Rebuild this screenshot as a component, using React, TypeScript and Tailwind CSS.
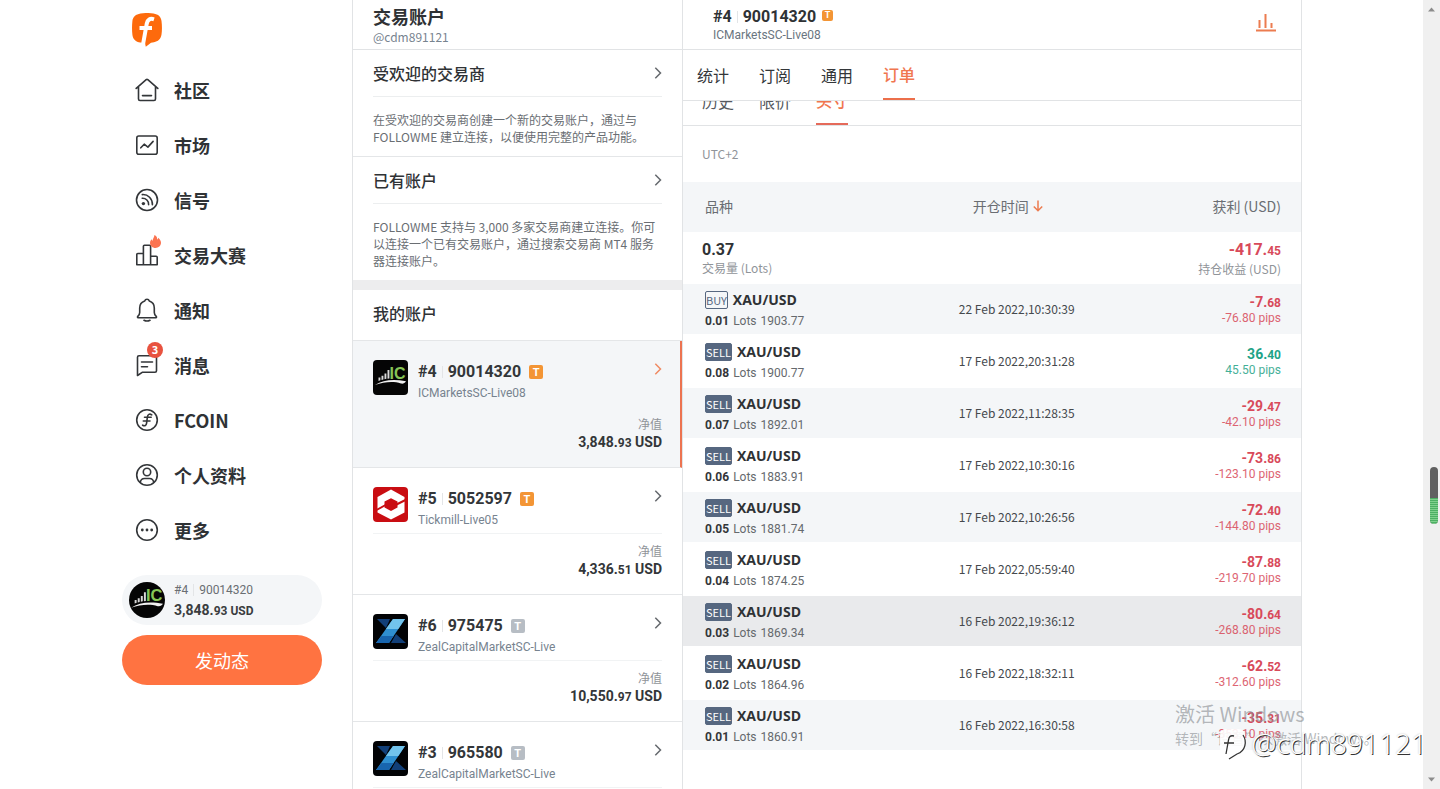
import type { ReactNode } from 'react';
import clsx from 'clsx';

type Broker = 'ic' | 'tickmill' | 'zeal';

interface Account {
  index: string;
  login: string;
  server: string;
  broker: Broker;
  tag: 'orange' | 'gray';
  equity?: [string, string];
  active?: boolean;
}

interface Order {
  side: 'BUY' | 'SELL';
  lots: string;
  price: string;
  time: string;
  profit: [string, string];
  pips: string;
  hovered?: boolean;
}

const accounts: Account[] = [
  { index: '#4', login: '90014320', server: 'ICMarketsSC-Live08', broker: 'ic', tag: 'orange', equity: ['3,848.', '93'], active: true },
  { index: '#5', login: '5052597', server: 'Tickmill-Live05', broker: 'tickmill', tag: 'orange', equity: ['4,336.', '51'] },
  { index: '#6', login: '975475', server: 'ZealCapitalMarketSC-Live', broker: 'zeal', tag: 'gray', equity: ['10,550.', '97'] },
  { index: '#3', login: '965580', server: 'ZealCapitalMarketSC-Live', broker: 'zeal', tag: 'gray' },
];

const orders: Order[] = [
  { side: 'BUY', lots: '0.01', price: '1903.77', time: '22 Feb 2022,10:30:39', profit: ['-7.', '68'], pips: '-76.80' },
  { side: 'SELL', lots: '0.08', price: '1900.77', time: '17 Feb 2022,20:31:28', profit: ['36.', '40'], pips: '45.50' },
  { side: 'SELL', lots: '0.07', price: '1892.01', time: '17 Feb 2022,11:28:35', profit: ['-29.', '47'], pips: '-42.10' },
  { side: 'SELL', lots: '0.06', price: '1883.91', time: '17 Feb 2022,10:30:16', profit: ['-73.', '86'], pips: '-123.10' },
  { side: 'SELL', lots: '0.05', price: '1881.74', time: '17 Feb 2022,10:26:56', profit: ['-72.', '40'], pips: '-144.80' },
  { side: 'SELL', lots: '0.04', price: '1874.25', time: '17 Feb 2022,05:59:40', profit: ['-87.', '88'], pips: '-219.70' },
  { side: 'SELL', lots: '0.03', price: '1869.34', time: '16 Feb 2022,19:36:12', profit: ['-80.', '64'], pips: '-268.80', hovered: true },
  { side: 'SELL', lots: '0.02', price: '1864.96', time: '16 Feb 2022,18:32:11', profit: ['-62.', '52'], pips: '-312.60' },
  { side: 'SELL', lots: '0.01', price: '1860.91', time: '16 Feb 2022,16:30:58', profit: ['-35.', '31'], pips: '-353.10' },
];

function Icon({ children }: { children: ReactNode }) {
  return (
    <svg className="size-6 shrink-0" viewBox="0 0 24 24" fill="none" stroke="#333639" strokeWidth="1.6" strokeLinecap="round" strokeLinejoin="round" aria-hidden="true">
      {children}
    </svg>
  );
}

const navItems: { label: string; icon: ReactNode; extra?: ReactNode }[] = [
  {
    label: '社区',
    icon: <Icon><path d="M1.2 10.4 11.2 1.7a1.2 1.2 0 0 1 1.6 0l10 8.7M3.5 9v12a1.5 1.5 0 0 0 1.5 1.5h14a1.5 1.5 0 0 0 1.500-1.500V9M7.500 17.600h9" /></Icon>,
  },
  {
    label: '市场',
    icon: <Icon><rect x="1.800" y="3" width="20.400" height="18.300" rx="2" /><path d="m5.800 14.800 3.400-3.600 3.700 2.900 5.200-5.700" /></Icon>,
  },
  {
    label: '信号',
    icon: (
      <Icon>
        <circle cx="12" cy="12" r="10.500" />
        <path d="M7.300 6.600c5.700-.4 10.300 4 10.100 10.200M7.200 10.300c3.800-.2 6.600 2.600 6.400 6.300" />
        <circle cx="8.400" cy="15.600" r="1.700" fill="#333639" stroke="none" />
      </Icon>
    ),
  },
  {
    label: '交易大赛',
    icon: <Icon><path d="M1.800 21.700V11.500a1 1 0 0 1 1-1h5.600M8.400 21.700V3.300a1 1 0 0 1 1-1h5.200a1 1 0 0 1 1 1v18.400M15.600 13.200h5.600a1 1 0 0 1 1 1v7.500M1.800 21.700h20.400" /></Icon>,
    extra: (
      <svg className="absolute -top-2 left-[15px] h-[13px] w-[11px]" viewBox="0 0 11 13" fill="#fb7350" aria-hidden="true">
        <path d="M4.400 0c2 1 3 2.500 2.800 4.400.7-.2 1-.8 1.100-1.600C10 4.300 11 6 11 7.800 11 10.800 8.500 13 5.500 13S0 10.800 0 8c0-1.700.8-2.900 1.700-3.800.2.9.5 1.400 1 1.600C2.500 3.700 4.500 2.300 4.400 0Z" />
      </svg>
    ),
  },
  {
    label: '通知',
    icon: <Icon><path d="M9.700 2.900a2.400 2.400 0 0 1 4.600 0c3.100 1 5 3.700 5 7v4.600c0 1.800.6 2.900 2 4a.7.7 0 0 1-.4 1.200H3.100a.7.7 0 0 1-.4-1.200c1.400-1.100 2-2.200 2-4V9.900c0-3.300 1.900-6 5-7ZM9 22.300c1.800.9 4.200.9 6 0" /></Icon>,
  },
  {
    label: '消息',
    icon: <Icon><path d="M2.500 22.500V4.200a1.500 1.500 0 0 1 1.500-1.500h16a1.500 1.500 0 0 1 1.500 1.500v13.600a1.500 1.500 0 0 1-1.500 1.500H7.200ZM6.500 9h11M6.500 13.700h6" /></Icon>,
    extra: (
      <span className="absolute -top-[11px] left-3 flex size-4 items-center justify-center rounded-full bg-[#e8523f] text-[11px] leading-none text-white">3</span>
    ),
  },
  {
    label: 'FCOIN',
    icon: <Icon><circle cx="12" cy="12" r="10.300" /><path d="M16.800 6.800c-2.300-1.500-4.100-.4-4.400 2.100l-.8 6.200c-.3 2.300-1.800 3.300-4 2.100M9.500 9.300h6.700M8.300 13h6.700" /></Icon>,
  },
  {
    label: '个人资料',
    icon: <Icon><circle cx="12" cy="12" r="10.300" /><circle cx="12" cy="9" r="3.700" /><path d="M5.300 19.500c.3-2.700 1.800-4 4.200-4h5c2.400 0 3.900 1.300 4.200 4" /></Icon>,
  },
  {
    label: '更多',
    icon: (
      <Icon>
        <circle cx="12" cy="12" r="10.300" />
        <g fill="#333639" stroke="none"><circle cx="7.300" cy="12" r="1.400" /><circle cx="12" cy="12" r="1.400" /><circle cx="16.700" cy="12" r="1.400" /></g>
      </Icon>
    ),
  },
];

function BrokerLogo({ broker, className }: { broker: Broker; className?: string }) {
  return (
    <svg className={clsx('shrink-0', className)} viewBox="0 0 35 35" aria-hidden="true">
      {broker === 'ic' && (
        <>
          <rect width="35" height="35" fill="#050505" />
          <path d="M5.500 17.500h1.900v2.700l-1.900.7ZM8.500 15.800h1.900v3.700l-1.900.5ZM11.500 13.500h1.900v5.300l-1.900.4ZM14.500 10h1.900v8.400l-1.900.3Z" fill="#d8d8d8" />
          <path d="M2 25C10 20 20 18.800 33 21.200 32 23 30 24 28 23.500 20 21 11 22 2 25Z" fill="#f1f1f1" />
          <text x="16.500" y="18.500" fontFamily="Liberation Sans, sans-serif" fontSize="16" fontWeight="700" fill="#86c556">IC</text>
        </>
      )}
      {broker === 'tickmill' && (
        <>
          <rect width="35" height="35" fill="#c90d12" />
          <path d="M18 2.500 31.500 10v15.500L18 32.500 4.500 25.500V10Z" fill="#fff" />
          <path d="M18 11.200 24.500 14.500v6L18 24l-6.500-3.500v-6Z" fill="#c90d12" />
          <path d="M23.500 17.500 32.500 13M12.500 18 3.500 23" stroke="#c90d12" strokeWidth="2" />
        </>
      )}
      {broker === 'zeal' && (
        <>
          <rect width="35" height="35" fill="#020305" />
          <path d="M4 5h13l-4 9Z" fill="#123f78" />
          <path d="M18 29l5-9 10 9Z" fill="#123f78" />
          <path d="M20 5h12L16 29H3Z" fill="#2f8fd0" />
          <path d="M20 5h12l-6.700 10H13Z" fill="#72c3ec" />
          <path d="M8.500 22h12L16 29H3Z" fill="#1865ae" />
        </>
      )}
    </svg>
  );
}

function Chevron({ active }: { active?: boolean }) {
  return (
    <svg className="h-3 w-2 shrink-0" viewBox="0 0 8 12" fill="none" stroke={active ? '#f08a62' : '#65696d'} strokeWidth="1.500" aria-hidden="true">
      <path d="m1.300.8 5.200 5.200-5.200 5.200" />
    </svg>
  );
}

function Tag({ color, small }: { color: 'orange' | 'gray'; small?: boolean }) {
  return (
    <span
      className={clsx(
        'flex items-center justify-center rounded-[2px] font-[Roboto,sans-serif] font-bold leading-none text-white',
        small ? 'size-[11px] text-[9px]' : 'size-[14px] text-[11px]',
        color === 'orange' ? 'bg-[#f39535]' : 'bg-[#b7bdc4]',
      )}
    >
      T
    </span>
  );
}

function AccountName({ index, login }: { index: string; login: string }) {
  return (
    <>
      <span>{index}</span>
      <span className="mx-[5px] h-3 w-px bg-[#e3e5e7]" />
      <span>{login}</span>
    </>
  );
}

function Sidebar() {
  return (
    <aside className="flex w-[230px] shrink-0 flex-col pr-[30px]">
      <a href="#home" aria-label="FOLLOWME" className="flex h-[62px] items-start pt-[13px] pl-[10px]">
        <svg className="h-[34px] w-[30px]" viewBox="0 0 30 34" aria-hidden="true">
          <path d="M8.500.5C12.500-.2 17.500-.2 21.500.5c5 .8 7.500 3.300 8 7.500.6 4.500.6 9.500 0 13.500-.6 4.500-3.500 7-7.500 7.700l-3 .5-5.200 4.100-.8-3.800c-1.800 0-3.200-.1-4.700-.4C3.800 28.800.8 26.300.4 21.800c-.5-4.500-.5-9.300 0-13.800C.9 3.800 3.800 1.300 8.500.5Z" fill="#fd6a0c" />
          <path d="M22 6.300c-4-1.300-6.400.4-7.200 4.200l-3.800 21M7.500 15h12.500" fill="none" stroke="#fff" strokeWidth="4" />
        </svg>
      </a>
      <nav>
        {navItems.map((item) => (
          <a key={item.label} href={`#${item.label}`} className="flex h-[55px] items-center gap-[15px] pl-[13px] text-lg font-bold text-[#2f3235]">
            <span className="relative">
              {item.icon}
              {item.extra}
            </span>
            {item.label}
          </a>
        ))}
      </nav>
      <a href="#account" className="mt-[18px] flex h-[50px] items-center gap-[9px] rounded-full bg-[#f4f6f8] pl-[7px]">
        <BrokerLogo broker="ic" className="size-9 rounded-full" />
        <span className="flex flex-col font-[Roboto,sans-serif]">
          <span className="flex items-center text-xs leading-5 text-[#6a6e73]">
            <AccountName index="#4" login="90014320" />
          </span>
          <span className="text-sm leading-5 font-bold text-[#3a3d40]">
            3,848.<span className="text-xs">93 USD</span>
          </span>
        </span>
      </a>
      <button type="button" className="mt-[10px] h-[50px] rounded-full bg-[#ff7341] text-lg text-white">发动态</button>
    </aside>
  );
}

function InfoSection({ title, children, last }: { title: string; children: ReactNode; last?: boolean }) {
  return (
    <section className={clsx('px-5 pb-[11px]', !last && 'border-b border-[#e4e6e8]')}>
      <a href={`#${title}`} className="flex h-[47px] items-center justify-between border-b border-[#eceeef] pb-px text-base font-medium text-[#2f3235]">
        {title}
        <Chevron />
      </a>
      <p className="mt-[14px] text-xs leading-[17px] text-[#6a6e73]">{children}</p>
    </section>
  );
}

function AccountRow({ account }: { account: Account }) {
  return (
    <li>
      <a
        href={`#${account.login}`}
        className={clsx(
          'flex flex-col border-b border-[#e4e6e8] pt-[19px] pb-4 pl-5',
          account.active ? 'border-r-2 border-r-[#ec7350] bg-[#f4f6f8] pr-[18px]' : 'pr-5',
        )}
      >
        <span className={clsx('flex h-[47px] border-b', account.active ? 'border-transparent' : 'border-[#f1f3f4]')}>
          <BrokerLogo broker={account.broker} className="size-[35px] rounded" />
          <span className="ml-[10px] flex flex-1 flex-col">
            <span className="flex items-center font-[Roboto,sans-serif] text-base leading-6 font-bold text-[#333639]">
              <AccountName index={account.index} login={account.login} />
              <span className="ml-2"><Tag color={account.tag} /></span>
            </span>
            <span className="font-[Roboto,sans-serif] text-xs leading-[18px] text-[#77838f]">{account.server}</span>
          </span>
          <span className="mt-[3px]"><Chevron active={account.active} /></span>
        </span>
        {account.equity && (
          <>
            <span className="mt-2 text-right text-xs leading-[18px] text-[#909499]">净值</span>
            <span className="text-right font-[Roboto,sans-serif] text-sm leading-[18px] font-bold text-[#333639]">
              {account.equity[0]}<span className="text-xs">{account.equity[1]}</span> USD
            </span>
          </>
        )}
      </a>
    </li>
  );
}

function AccountsColumn() {
  return (
    <section className="w-[331px] shrink-0 border-x border-[#e1e3e5]">
      <header className="h-[50px] border-b border-[#e1e3e5] px-5 pt-1">
        <h1 className="text-lg leading-6 font-bold text-[#2f3235]">交易账户</h1>
        <p className="text-xs leading-[18px] text-[#77838f]">@cdm891121</p>
      </header>
      <InfoSection title="受欢迎的交易商">
        在受欢迎的交易商创建一个新的交易账户，通过与 FOLLOWME 建立连接，以便使用完整的产品功能。
      </InfoSection>
      <InfoSection title="已有账户" last>
        FOLLOWME 支持与 3,000 多家交易商建立连接。你可以连接一个已有交易账户，通过搜索交易商 MT4 服务器连接账户。
      </InfoSection>
      <div className="h-[10px] bg-[#ededee]" />
      <h2 className="flex h-[51px] items-center border-b border-[#e4e6e8] px-5 pb-1 text-base font-medium text-[#2f3235]">我的账户</h2>
      <ul>
        {accounts.map((account) => (
          <AccountRow key={account.login} account={account} />
        ))}
      </ul>
    </section>
  );
}

function OrderRow({ order, striped }: { order: Order; striped: boolean }) {
  const loss = order.profit[0].startsWith('-');
  return (
    <tr className={clsx('h-[52px]', order.hovered ? 'bg-[#e9eaec]' : striped && 'bg-[#f4f6f8]')}>
      <td className="border-b-2 border-white pt-[6px] pb-[3px] pl-[22px]">
        <div className="mb-px flex h-5 items-center gap-[5px]">
          <span
            className={clsx(
              'flex h-[18px] items-center rounded-[2px] border border-[#566780] text-[11px]',
              order.side === 'BUY' ? 'text-[#566780]' : 'bg-[#566780] text-white',
            )}
          >
            {order.side}
          </span>
          <span className="font-['Open_Sans',sans-serif] text-sm leading-5 font-bold text-[#2f3235]">XAU/USD</span>
        </div>
        <div className="flex gap-1 font-[Roboto,sans-serif] text-xs leading-5 text-[#65696d]">
          <b className="text-[#333639]">{order.lots}</b>
          <span>Lots</span>
          <span>{order.price}</span>
        </div>
      </td>
      <td className="border-b-2 border-white text-center text-xs text-[#45494d]">{order.time}</td>
      <td className={clsx('border-b-2 border-white pt-[3px] pr-5 text-right font-[Roboto,sans-serif] leading-[15px]', loss ? 'text-[#d84a5a]' : 'text-[#1fa387]')}>
        <div className="text-sm leading-[15px] font-bold">
          {order.profit[0]}<span className="text-xs leading-[15px]">{order.profit[1]}</span>
        </div>
        <div className="text-xs leading-[15px] opacity-85">{order.pips} pips</div>
      </td>
    </tr>
  );
}

function OrdersColumn() {
  return (
    <main className="min-w-0 flex-1 border-r border-[#e1e3e5]">
      <header className="flex h-[50px] items-start justify-between border-b border-[#e1e3e5] pr-[25px] pl-[30px]">
        <div className="pt-[7px]">
          <div className="flex items-center font-[Roboto,sans-serif] text-base leading-5 font-bold text-[#2f3235]">
            <AccountName index="#4" login="90014320" />
            <span className="mb-1 ml-1.5"><Tag color="orange" small /></span>
          </div>
          <div className="font-[Roboto,sans-serif] text-xs leading-4 text-[#6a7580]">ICMarketsSC-Live08</div>
        </div>
        <button type="button" aria-label="统计图" className="mt-[13px]">
          <svg className="h-[19px] w-5" viewBox="0 0 20 19" fill="none" stroke="#ec7c50" strokeWidth="2" aria-hidden="true">
            <path d="M0 17.500h20M3.500 7v8M9.500 1v14M15.500 10v5" />
          </svg>
        </button>
      </header>

      <nav className="flex h-[51px] items-stretch gap-[30px] border-b border-[#e1e3e5] pl-[14px] text-base text-[#333639]">
        <button type="button">统计</button>
        <button type="button">订阅</button>
        <button type="button">通用</button>
        <button type="button" className="border-b-2 border-[#ec6f4b] font-medium text-[#f0764f]">订单</button>
      </nav>

      {/* second tab level, scrolled half way under the first one */}
      <nav className="flex h-[25px] items-end gap-[25px] overflow-hidden border-b border-[#e1e3e5] pl-[19px] text-base text-[#55595e]">
        <button type="button" className="h-12 shrink-0">历史</button>
        <button type="button" className="h-12 shrink-0">限价</button>
        <button type="button" className="h-12 shrink-0 border-b-2 border-[#e56a5a] font-medium text-[#f0764f]">头寸</button>
      </nav>

      <p className="flex h-14 items-center pb-px pl-[19px] text-xs text-[#909499]">UTC+2</p>

      <table className="w-full table-fixed border-separate border-spacing-0">
        <thead>
          <tr className="h-[50px] bg-[#f4f6f8] text-sm text-[#6a6e73]">
            <th className="w-[40%] pb-0.5 pl-[22px] text-left font-normal">品种</th>
            <th className="w-[28%] pr-[18px] pb-0.5 font-normal">
              <button type="button" className="inline-flex items-center gap-1">
                开仓时间
                <svg className="h-3 w-[10px]" viewBox="0 0 10 12" fill="none" stroke="#ec7c50" strokeWidth="1.500" aria-hidden="true">
                  <path d="M5 .5v10M.8 6.500 5 10.800l4.200-4.300" />
                </svg>
              </button>
            </th>
            <th className="pr-5 pb-0.5 text-right font-normal">获利 (USD)</th>
          </tr>
        </thead>
        <tbody>
          <tr className="h-[52px]">
            <td className="pt-0.5 pl-[19px]">
              <div className="font-[Roboto,sans-serif] text-base leading-[18px] font-bold text-[#2f3235]">0.37</div>
              <div className="text-xs leading-[18px] text-[#909499]">交易量 (Lots)</div>
            </td>
            <td />
            <td className="pt-0.5 pr-5 text-right">
              <div className="font-[Roboto,sans-serif] text-base leading-[18px] font-bold text-[#d84a5a]">
                -417.<span className="text-xs leading-[18px]">45</span>
              </div>
              <div className="text-xs leading-[18px] text-[#909499]">持仓收益 (USD)</div>
            </td>
          </tr>
          {orders.map((order, i) => (
            <OrderRow key={order.time} order={order} striped={i % 2 === 0} />
          ))}
        </tbody>
      </table>
    </main>
  );
}

function ScrollTrack() {
  return (
    <div className="flex w-[17px] shrink-0 flex-col items-center bg-[#f0f0f0] py-[7px]" aria-hidden="true">
      <svg className="h-[5px] w-[7px]" viewBox="0 0 7 5" fill="#8c8c8c"><path d="M0 4.500 3.500.5 7 4.500Z" /></svg>
      <span className="flex-[455]" />
      <span className="ml-1 flex h-[57px] w-2 flex-col overflow-hidden rounded-full bg-[#606060] pt-[31px]">
        <span className="flex-1 bg-[repeating-linear-gradient(#4caf63_0_1px,#7fd08c_1px_2px)]" />
      </span>
      <span className="flex-[253]" />
      <svg className="h-[5px] w-[7px]" viewBox="0 0 7 5" fill="#8c8c8c"><path d="M0 .5 3.500 4.500 7 .5Z" /></svg>
    </div>
  );
}

function Watermarks() {
  return (
    <div className="pointer-events-none">
      <div className="absolute right-[62px] bottom-[39px] w-[203px] whitespace-nowrap text-[#8d9195]/65">
        <p className="text-xl leading-6">激活 Windows</p>
        <p className="text-sm leading-6">转到“设置”以激活 Windows。</p>
      </div>
      <div className="absolute right-[13px] bottom-[26px] flex items-center gap-1">
        <svg className="h-9 w-8" viewBox="0 0 32 36" fill="none" aria-hidden="true">
          <path d="M10 4h12q7 0 7 7v12q0 7-7 8l-8 4-2-4q-8-1-8-8V11q0-7 6-7Z" fill="#fff" fillOpacity=".9" />
          <path d="M18 11c-4-1-5 1-5.500 4L10 29M8 18h10M27 10c4 6 3 16-6 19l-8 5" stroke="#333" strokeWidth="1.300" />
        </svg>
        <span className="font-['Open_Sans','Noto_Sans',sans-serif] text-[28px] leading-10 font-light text-white [text-shadow:1px_1px_0_#333,0_0_2px_#bbb]">@cdm891121</span>
      </div>
    </div>
  );
}

export default function App() {
  return (
    <div className="relative flex h-screen overflow-hidden bg-white font-['Noto_Sans_CJK_SC',sans-serif]">
      <div className="min-w-0 flex-1 pl-px">
        <div className="mx-auto flex min-h-full max-w-[1180px]">
          <Sidebar />
          <AccountsColumn />
          <OrdersColumn />
        </div>
      </div>
      <ScrollTrack />
      <Watermarks />
    </div>
  );
}
